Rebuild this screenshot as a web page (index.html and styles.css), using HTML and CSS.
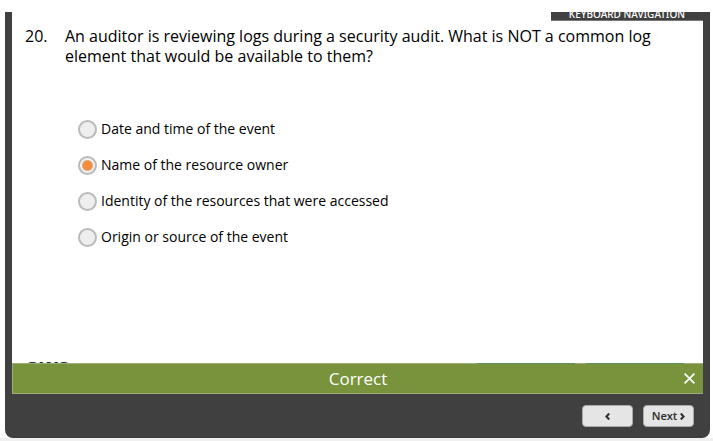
FILE: index.html
```html
<!DOCTYPE html>
<html lang="en">
<head>
<meta charset="utf-8">
<meta name="viewport" content="width=device-width, initial-scale=1">
<title>Security audit quiz</title>
<link rel="stylesheet" href="styles.css">
</head>
<body>
<main class="player">
  <section class="slide">
    <div class="toolbar"><button class="keyboard" type="button">KEYBOARD NAVIGATION</button></div>
    <form class="quiz">
      <fieldset class="question">
        <legend class="prompt">
          <span class="number">20.</span>
          <span class="text">An auditor is reviewing logs during a security audit. What is NOT a common log element that would be available to them?</span>
        </legend>
        <div class="answers">
          <label class="answer"><input type="radio" name="answer">Date and time of the event</label>
          <label class="answer"><input type="radio" name="answer" checked>Name of the resource owner</label>
          <label class="answer"><input type="radio" name="answer">Identity of the resources that were accessed</label>
          <label class="answer"><input type="radio" name="answer">Origin or source of the event</label>
        </div>
      </fieldset>
    </form>
    <div class="brand">aws</div>
  </section>
  <div class="feedback" role="status">
    <span class="result">Correct</span>
    <button class="close" type="button" aria-label="Close">
      <svg width="11" height="11" viewBox="0 0 11 11" aria-hidden="true"><path d="M.6.6 10.4 10.4M10.4.6.6 10.4" fill="none" stroke="#fff" stroke-width="1.7"/></svg>
    </button>
  </div>
  <nav class="controls">
    <button class="step" type="button" aria-label="Previous">
      <svg width="5" height="7" viewBox="0 0 5 7" aria-hidden="true"><path d="M4.2.5 1.4 3.5 4.2 6.5" fill="none" stroke="#333" stroke-width="2.1"/></svg>
    </button>
    <button class="step" type="button">Next
      <svg width="5" height="7" viewBox="0 0 5 7" aria-hidden="true"><path d="M.8.5 3.6 3.5.8 6.5" fill="none" stroke="#333" stroke-width="2.1"/></svg>
    </button>
  </nav>
</main>
</body>
</html>
```
FILE: styles.css
```css
* {
  box-sizing: border-box;
}

body {
  margin: 0;
  min-height: 100vh;
  display: flex;
  padding: 12px 3px 3px 5px;
  background: linear-gradient(to top, #f0f0f0 3px, #fff 3px);
  color: #000;
  font-family: "Open Sans", "Noto Sans", sans-serif;
}

button {
  border: 0;
  padding: 0;
  font-family: "Noto Sans", "Open Sans", sans-serif;
  cursor: pointer;
}

.player {
  flex: 1;
  display: flex;
  flex-direction: column;
  padding: 0 7px;
  background: #404040;
  border-radius: 0 0 8px 8px;
}

.slide {
  flex: 1;
  display: flex;
  flex-direction: column;
  background: #fff;
}

.toolbar {
  display: flex;
  justify-content: flex-end;
  height: 9px;
  overflow: hidden;
}

.keyboard {
  display: flex;
  align-items: flex-end;
  align-self: flex-end;
  height: 24px;
  padding: 0 18px;
  border-bottom: 1px solid #777;
  background: #404040;
  color: #fff;
  font-size: 10px;
  font-weight: 500;
  line-height: 12px;
}

.quiz {
  flex: 1;
  padding: 5px 13px 0;
}

.question {
  margin: 0;
  padding: 0;
  border: 0;
}

.prompt {
  display: flex;
  padding: 0;
  font-size: 16px;
  line-height: 20px;
}

.number {
  flex: 0 0 40px;
}

.text {
  max-width: 600px;
}

.answers {
  display: flex;
  flex-direction: column;
  gap: 16px;
  padding: 53px 0 0 53px;
  font-size: 14px;
  line-height: 20px;
}

.answer {
  display: flex;
  align-items: center;
  align-self: flex-start;
  gap: 4px;
}

.answer input {
  appearance: none;
  width: 19px;
  height: 19px;
  margin: 0;
  border: 2px solid #bababa;
  border-radius: 50%;
  background: #eee;
}

.answer input:checked {
  background: radial-gradient(circle, #f58b3c 4px, #dfa77c 5px, #f2f2f2 6px);
}

.brand {
  height: 3px;
  padding-left: 14px;
  overflow: hidden;
  color: #252f3e;
  font-size: 22px;
  font-weight: 700;
  line-height: 10px;
}

.feedback {
  display: grid;
  grid-template-columns: 1fr auto 1fr;
  align-items: center;
  height: 31px;
  padding: 0 8px;
  border: 1px solid transparent;
  border-width: 1px 0 1px 1px;
  background:
    linear-gradient(#5f8f62, #5f8f62) right 19px top / 98px 1px no-repeat border-box,
    linear-gradient(#5f8f62, #5f8f62) right 128px top / 98px 1px no-repeat border-box,
    linear-gradient(#78933c, #78933c) padding-box,
    #9dac78;
  color: #fff;
}

.result {
  grid-column: 2;
  font-size: 17px;
  font-weight: 500;
  line-height: 24px;
}

.close {
  display: flex;
  justify-self: end;
  background: none;
}

.controls {
  display: flex;
  justify-content: flex-end;
  gap: 10px;
  padding: 11px 9px;
}

.step {
  display: flex;
  align-items: center;
  justify-content: center;
  gap: 3px;
  width: 51px;
  height: 22px;
  border: 1px solid #aaa;
  border-radius: 4px;
  background: #e5e5e5;
  color: #333;
  font-size: 11px;
  font-weight: 600;
  line-height: 16px;
}
```
